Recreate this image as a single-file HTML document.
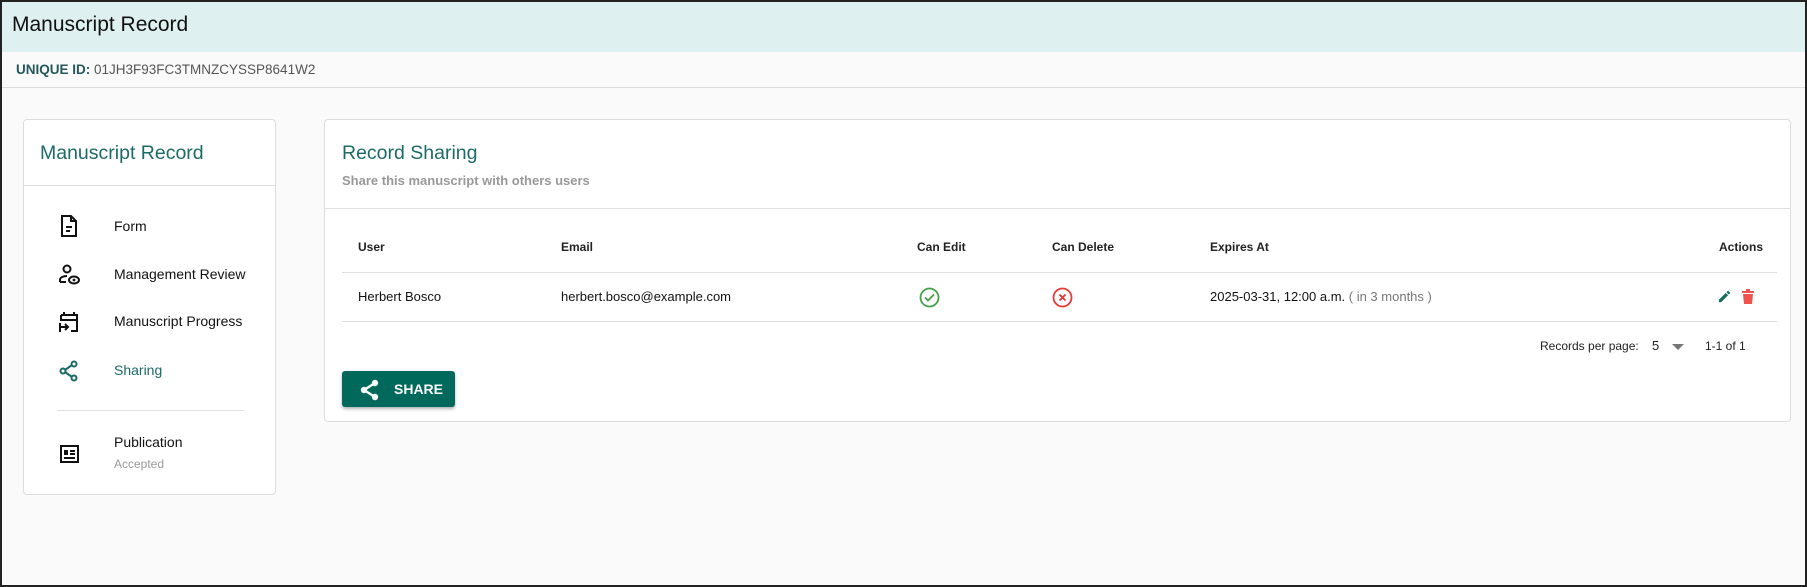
<!DOCTYPE html>
<html><head><meta charset="utf-8"><style>
*{box-sizing:border-box;margin:0;padding:0}
html,body{width:1807px;height:587px;overflow:hidden}
body{font-family:"Liberation Sans",Arial,sans-serif;background:#fafafa;border:2px solid #222;position:relative;color:#111}
.abs{position:absolute;white-space:nowrap}
.hdr{position:absolute;left:0;top:0;width:1803px;height:50px;background:#dff0f0}
.idrow{position:absolute;left:0;top:50px;width:1803px;height:36px;border-bottom:1px solid #ddd}
.card{position:absolute;background:#fff;border:1px solid #ddd;border-radius:4px}
.t13{font-size:13px}
.hline{position:absolute;height:1px;background:#e0e0e0}
</style></head><body>
<div class="hdr"></div>
<div class="abs" style="left:10px;top:11px;font-size:21px;color:#111">Manuscript Record</div>
<div class="idrow"></div>
<div class="abs" style="left:14px;top:60px;font-size:13.5px;color:#555"><b style="color:#25585a">UNIQUE ID:</b> 01JH3F93FC3TMNZCYSSP8641W2</div>

<div class="card" style="left:21px;top:117px;width:253px;height:376px"></div>
<div class="abs" style="left:38px;top:140px;font-size:19.5px;color:#1b6b66">Manuscript Record</div>
<div class="hline" style="left:22px;top:183px;width:251px"></div>

<svg class="abs" style="left:57px;top:213px" width="20" height="22" viewBox="0 0 20 22"><path d="M3 1h9l5 5v15H3z M12 1v5h5" fill="none" stroke="#111" stroke-width="2"/><path d="M7 12h6M7 16h4" stroke="#111" stroke-width="2"/></svg>
<div class="abs" style="left:112px;top:216px;font-size:14px">Form</div>

<svg class="abs" style="left:57px;top:262px" width="22" height="22" viewBox="0 0 22 22"><circle cx="8" cy="5" r="3.5" fill="none" stroke="#111" stroke-width="2"/><path d="M1 18v-2c0-3 4-4 7-4" fill="none" stroke="#111" stroke-width="2"/><path d="M1 18h6" stroke="#111" stroke-width="2"/><ellipse cx="15" cy="16" rx="5" ry="3.5" fill="none" stroke="#111" stroke-width="2"/><circle cx="15" cy="16" r="1.4" fill="#111"/></svg>
<div class="abs" style="left:112px;top:264px;font-size:14px">Management Review</div>

<svg class="abs" style="left:57px;top:309px" width="20" height="22" viewBox="0 0 20 22"><path d="M5 1v4M15 1v4M2 4h16v16h-6M2 4v6M2 9h16" fill="none" stroke="#111" stroke-width="2"/><path d="M1 12v9M1 16h8M6 13l3 3-3 3" fill="none" stroke="#111" stroke-width="2"/></svg>
<div class="abs" style="left:112px;top:311px;font-size:14px">Manuscript Progress</div>

<svg class="abs" style="left:57px;top:358px" width="20" height="22" viewBox="0 0 20 22"><circle cx="15" cy="4" r="2.5" fill="none" stroke="#1b6b66" stroke-width="2"/><circle cx="4" cy="11" r="2.5" fill="none" stroke="#1b6b66" stroke-width="2"/><circle cx="15" cy="18" r="2.5" fill="none" stroke="#1b6b66" stroke-width="2"/><path d="M6 10l7-5M6 12l7 5" stroke="#1b6b66" stroke-width="2"/></svg>
<div class="abs" style="left:112px;top:360px;font-size:14px;color:#1b6b66">Sharing</div>

<div class="hline" style="left:55px;top:408px;width:187px"></div>

<svg class="abs" style="left:58px;top:443px" width="19" height="18" viewBox="0 0 19 18"><rect x="1" y="1" width="17" height="16" fill="none" stroke="#111" stroke-width="2"/><path d="M4 5h4v5H4z" fill="#111"/><path d="M10 6h5M10 9h5M4 13h11" stroke="#111" stroke-width="2"/></svg>
<div class="abs" style="left:112px;top:432px;font-size:14px">Publication</div>
<div class="abs" style="left:112px;top:455px;font-size:12px;color:#999">Accepted</div>

<div class="card" style="left:322px;top:117px;width:1467px;height:303px"></div>
<div class="abs" style="left:340px;top:140px;font-size:19.5px;color:#1b6b66">Record Sharing</div>
<div class="abs" style="left:340px;top:171px;font-size:13px;color:#999;font-weight:bold">Share this manuscript with others users</div>
<div class="hline" style="left:323px;top:206px;width:1465px"></div>

<div class="abs" style="left:356px;top:238px;font-size:12px;font-weight:bold;color:#222">User</div>
<div class="abs" style="left:559px;top:238px;font-size:12px;font-weight:bold;color:#222">Email</div>
<div class="abs" style="left:915px;top:238px;font-size:12px;font-weight:bold;color:#222">Can Edit</div>
<div class="abs" style="left:1050px;top:238px;font-size:12px;font-weight:bold;color:#222">Can Delete</div>
<div class="abs" style="left:1208px;top:238px;font-size:12px;font-weight:bold;color:#222">Expires At</div>
<div class="abs" style="left:1717px;top:238px;font-size:12px;font-weight:bold;color:#222">Actions</div>
<div class="hline" style="left:340px;top:270px;width:1435px"></div>

<div class="abs t13" style="left:356px;top:287px">Herbert Bosco</div>
<div class="abs t13" style="left:559px;top:287px">herbert.bosco@example.com</div>
<svg class="abs" style="left:917px;top:285px" width="21" height="21" viewBox="0 0 21 21"><circle cx="10.5" cy="10.5" r="9" fill="none" stroke="#43a047" stroke-width="1.8"/><path d="M6 10.5l3 3 6-6" fill="none" stroke="#43a047" stroke-width="1.8"/></svg>
<svg class="abs" style="left:1050px;top:285px" width="21" height="21" viewBox="0 0 21 21"><circle cx="10.5" cy="10.5" r="9" fill="none" stroke="#e53935" stroke-width="1.8"/><path d="M7.5 7.5l6 6M13.5 7.5l-6 6" stroke="#e53935" stroke-width="1.8"/></svg>
<div class="abs t13" style="left:1208px;top:287px">2025-03-31, 12:00 a.m. <span style="color:#777">( in 3 months )</span></div>
<svg class="abs" style="left:1715px;top:287px" width="15" height="15" viewBox="0 0 24 24"><path d="M3 17.25V21h3.75L17.8 9.94l-3.75-3.75zM20.7 7.04a1 1 0 000-1.41l-2.34-2.34a1 1 0 00-1.410 0l-1.83 1.83 3.75 3.75z" fill="#1b6b5f"/></svg>
<svg class="abs" style="left:1739px;top:287px" width="14" height="15" viewBox="0 0 14 15"><path d="M1 2h12v2H1zM5 0h4v2H5zM2 5h10l-1 10H3z" fill="#ef5350"/></svg>
<div class="hline" style="left:340px;top:319px;width:1435px"></div>

<div class="abs" style="left:1538px;top:337px;font-size:12px;color:#222">Records per page:</div>
<div class="abs t13" style="left:1650px;top:336px;color:#222">5</div>
<svg class="abs" style="left:1670px;top:342px" width="12" height="6"><path d="M0 0h12L6 6z" fill="#777"/></svg>
<div class="abs" style="left:1703px;top:337px;font-size:12px;color:#222">1-1 of 1</div>

<div class="abs" style="left:340px;top:369px;width:113px;height:36px;background:#00695c;border-radius:3px;box-shadow:0 2px 3px rgba(0,0,0,.3)"></div>
<svg class="abs" style="left:358px;top:377px" width="20" height="22" viewBox="0 0 20 22"><circle cx="15" cy="4" r="3.2" fill="#fff"/><circle cx="4" cy="11" r="3.2" fill="#fff"/><circle cx="15" cy="18" r="3.2" fill="#fff"/><path d="M4 11l11-7M4 11l11 7" stroke="#fff" stroke-width="2.4"/></svg>
<div class="abs" style="left:392px;top:379px;font-size:14px;font-weight:bold;color:#fff">SHARE</div>
</body></html>
